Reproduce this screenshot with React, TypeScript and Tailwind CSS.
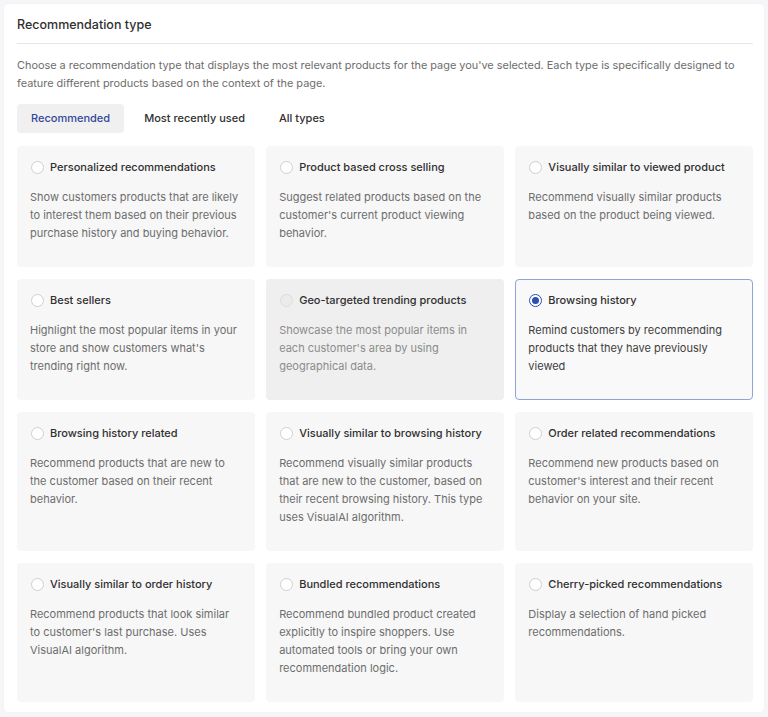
const items = [
  {
    title: "Personalized recommendations",
    desc: "Show customers products that are likely to interest them based on their previous purchase history and buying behavior.",
  },
  {
    title: "Product based cross selling",
    desc: "Suggest related products based on the customer's current product viewing behavior.",
  },
  {
    title: "Visually similar to viewed product",
    desc: "Recommend visually similar products based on the product being viewed.",
  },
  {
    title: "Best sellers",
    desc: "Highlight the most popular items in your store and show customers what's trending right now.",
  },
  {
    title: "Geo-targeted trending products",
    desc: "Showcase the most popular items in each customer's area by using geographical data.",
    disabled: true,
  },
  {
    title: "Browsing history",
    desc: "Remind customers by recommending products that they have previously viewed",
    selected: true,
  },
  {
    title: "Browsing history related",
    desc: "Recommend products that are new to the customer based on their recent behavior.",
  },
  {
    title: "Visually similar to browsing history",
    desc: "Recommend visually similar products that are new to the customer, based on their recent browsing history. This type uses VisualAI algorithm.",
  },
  {
    title: "Order related recommendations",
    desc: "Recommend new products based on customer's interest and their recent behavior on your site.",
  },
  {
    title: "Visually similar to order history",
    desc: "Recommend products that look similar to customer's last purchase. Uses VisualAI algorithm.",
  },
  {
    title: "Bundled recommendations",
    desc: "Recommend bundled product created explicitly to inspire shoppers. Use automated tools or bring your own recommendation logic.",
  },
  {
    title: "Cherry-picked recommendations",
    desc: "Display a selection of hand picked recommendations.",
  },
];

function Radio({ selected, disabled }: { selected?: boolean; disabled?: boolean }) {
  if (selected) {
    return (
      <span className="flex h-[13px] w-[13px] shrink-0 items-center justify-center rounded-full border border-[#2c4fb0] bg-white">
        <span className="h-[7px] w-[7px] rounded-full bg-[#2c4fb0]" />
      </span>
    );
  }
  return (
    <span
      className={
        disabled
          ? "h-[13px] w-[13px] shrink-0 rounded-full border border-[#dcdcdc] bg-[#ebebeb]"
          : "h-[13px] w-[13px] shrink-0 rounded-full border border-[#cfcfcf] bg-white"
      }
    />
  );
}

export default function App() {
  return (
    <div className="min-h-screen bg-[#f6f5f7] p-[4px] font-['Inter',sans-serif]">
      <div className="rounded-[4px] bg-white pb-[10px] pl-[13px] pr-[11px] pt-[12px] shadow-[0_0_2px_rgba(0,0,0,0.06)]">
        <h2 className="border-b border-[#e6e6e6] pb-[9px] text-[12.5px] font-medium leading-[18px] text-[#303030]">
          Recommendation type
        </h2>
        <p className="mt-[12px] text-[10.9px] leading-[18px] text-[#6d6d6d]">
          Choose a recommendation type that displays the most relevant products for the page you've selected. Each type is specifically designed to feature different products based on the context of the page.
        </p>
        <div className="mt-[12px] flex items-center gap-[6px] text-[11px] font-medium">
          <button className="h-[29px] rounded-[4px] bg-[#f0f0f0] px-[14px] text-[#33479a]">Recommended</button>
          <button className="h-[29px] rounded-[4px] px-[14px] text-[#303030]">Most recently used</button>
          <button className="h-[29px] rounded-[4px] px-[14px] text-[#303030]">All types</button>
        </div>
        <div className="mt-[13px] grid grid-cols-3 gap-x-[11.5px] gap-y-[12px]">
          {items.map((it) => (
            <div
              key={it.title}
              className={
                it.selected
                  ? "rounded-[4px] border border-[#8fa3dc] bg-[#f9f9f9] px-[12px] pb-[24px] pt-[11px]"
                  : it.disabled
                  ? "rounded-[4px] border border-transparent bg-[#efefef] px-[12px] pb-[24px] pt-[11px]"
                  : "rounded-[4px] border border-transparent bg-[#f7f7f7] px-[12px] pb-[24px] pt-[11px]"
              }
            >
              <div className="flex items-center gap-[6px] pl-[1px]">
                <Radio selected={it.selected} disabled={it.disabled} />
                <span className="text-[11px] font-medium leading-[18px] text-[#303030]">{it.title}</span>
              </div>
              <p
                className={
                  it.disabled
                    ? "mt-[12px] text-[11px] leading-[18px] text-[#8c8c8c]"
                    : it.selected
                    ? "mt-[12px] text-[11px] leading-[18px] text-[#404040]"
                    : "mt-[12px] text-[11px] leading-[18px] text-[#6d6d6d]"
                }
              >
                {it.desc}
              </p>
            </div>
          ))}
        </div>
      </div>
    </div>
  );
}
